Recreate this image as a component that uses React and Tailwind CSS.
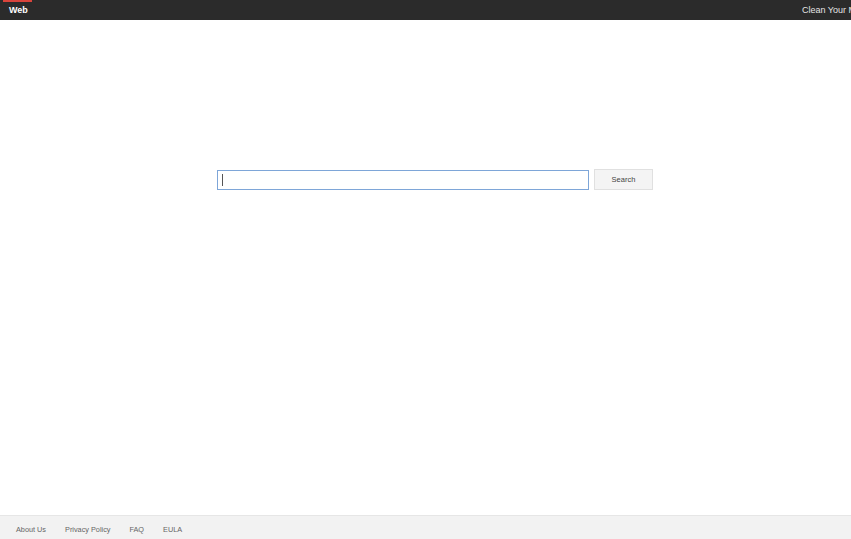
import React from "react";

export default function App() {
  return (
    <div className="w-[851px] h-[539px] flex flex-col bg-white overflow-hidden" style={{ fontFamily: '"Liberation Sans", Arial, sans-serif' }}>
      <header className="relative h-[20px] shrink-0 bg-[#2b2b2b] flex items-center overflow-hidden">
        <div className="absolute left-[3px] top-0 w-[29px] h-[2px] bg-[#d9443c]" />
        <div className="w-[802px] shrink-0 pl-[9px] flex items-center">
          <span className="text-[9px] font-bold text-white leading-none">Web</span>
        </div>
        <span className="text-[9px] text-[#e5e5e5] leading-none whitespace-nowrap">Clean Your Mac</span>
      </header>
      <main className="flex-1 flex flex-col">
        <div className="h-[149px]" />
        <div className="flex items-center pl-[217px] gap-[5px]">
          <div className="w-[372px] h-[20px] border border-[#7ea6d8] bg-white flex items-center pl-[4px]">
            <div className="w-[1px] h-[12px] bg-[#555]" />
          </div>
          <button className="w-[59px] h-[21px] bg-[#f4f4f4] border border-[#e0e0e0] text-[7.5px] text-[#444] leading-none">Search</button>
        </div>
      </main>
      <footer className="h-[24px] shrink-0 bg-[#f2f2f2] border-t border-[#e6e6e6] flex items-center pt-[5px] pl-[16px] gap-[19px] text-[7.3px] text-[#666]">
        <span>About Us</span>
        <span>Privacy Policy</span>
        <span>FAQ</span>
        <span>EULA</span>
      </footer>
    </div>
  );
}
